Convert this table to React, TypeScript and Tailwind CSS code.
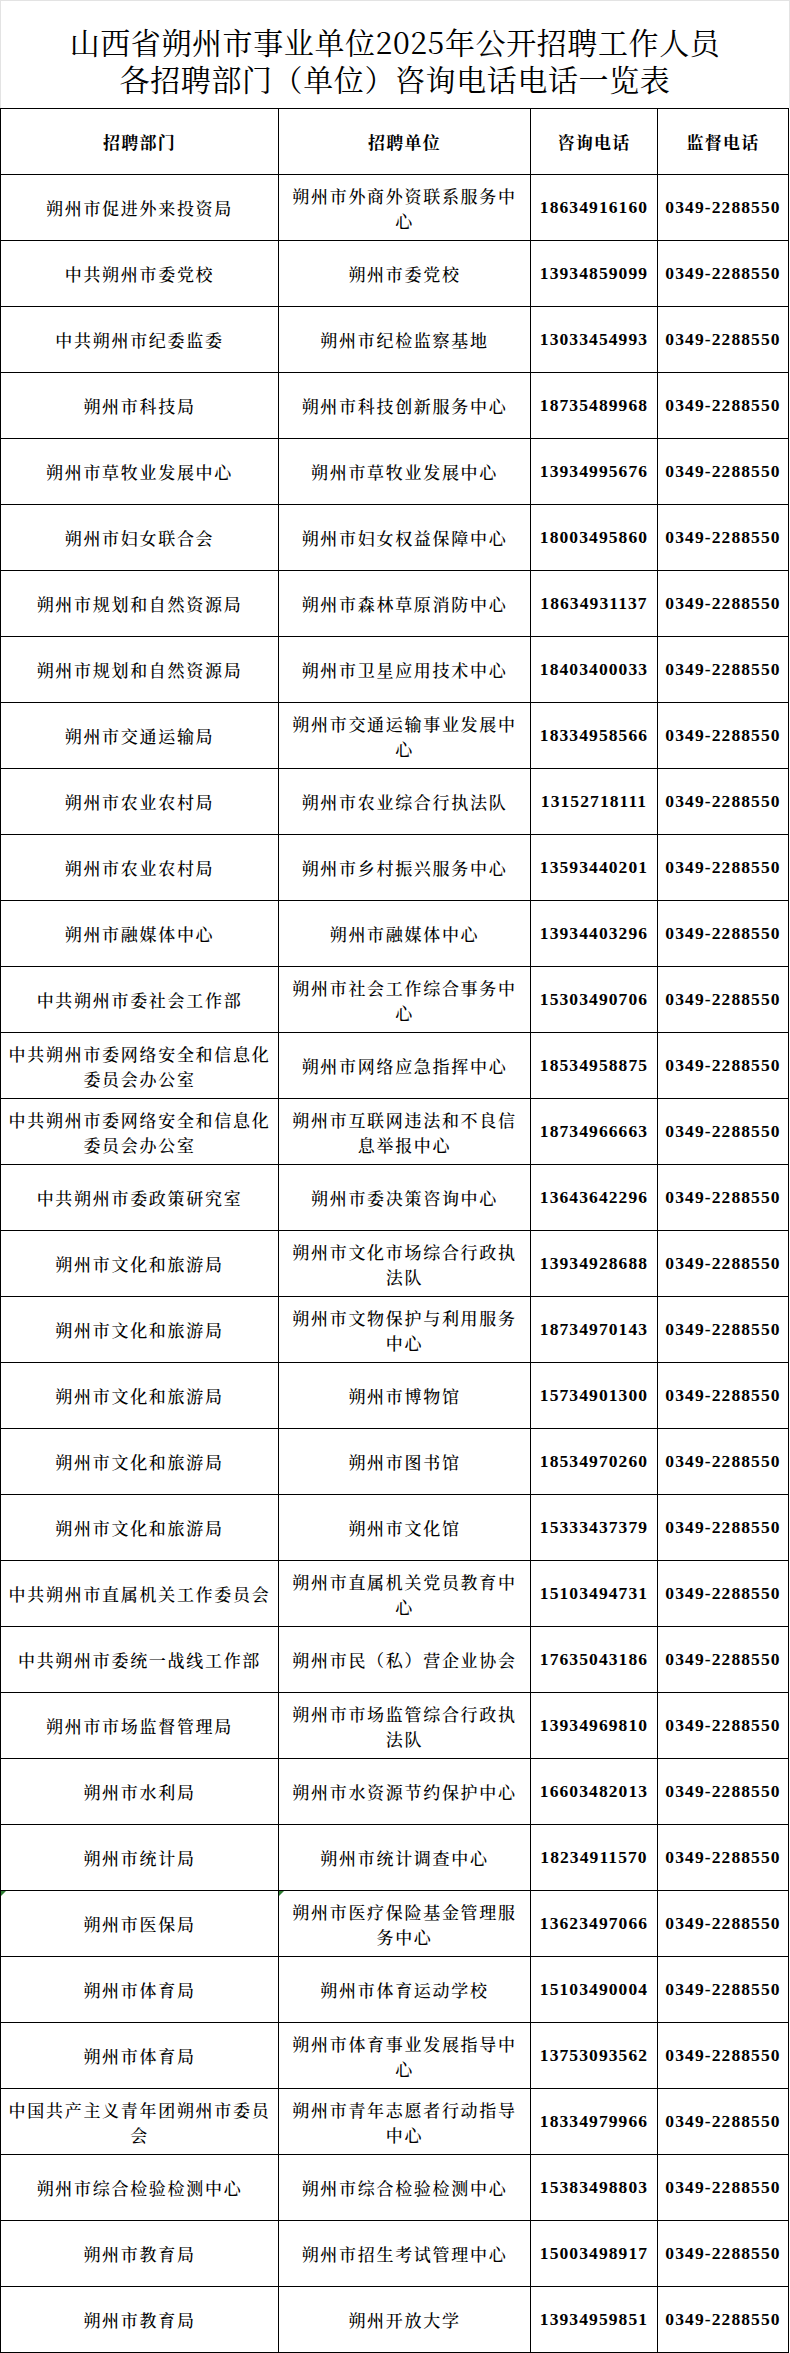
import React from "react";

type Row = { dept: string; unit: string; phone: string; mark?: boolean };

const rows: Row[] = [
  { dept: "朔州市促进外来投资局", unit: "朔州市外商外资联系服务中心", phone: "18634916160" },
  { dept: "中共朔州市委党校", unit: "朔州市委党校", phone: "13934859099" },
  { dept: "中共朔州市纪委监委", unit: "朔州市纪检监察基地", phone: "13033454993" },
  { dept: "朔州市科技局", unit: "朔州市科技创新服务中心", phone: "18735489968" },
  { dept: "朔州市草牧业发展中心", unit: "朔州市草牧业发展中心", phone: "13934995676" },
  { dept: "朔州市妇女联合会", unit: "朔州市妇女权益保障中心", phone: "18003495860" },
  { dept: "朔州市规划和自然资源局", unit: "朔州市森林草原消防中心", phone: "18634931137" },
  { dept: "朔州市规划和自然资源局", unit: "朔州市卫星应用技术中心", phone: "18403400033" },
  { dept: "朔州市交通运输局", unit: "朔州市交通运输事业发展中心", phone: "18334958566" },
  { dept: "朔州市农业农村局", unit: "朔州市农业综合行执法队", phone: "13152718111" },
  { dept: "朔州市农业农村局", unit: "朔州市乡村振兴服务中心", phone: "13593440201" },
  { dept: "朔州市融媒体中心", unit: "朔州市融媒体中心", phone: "13934403296" },
  { dept: "中共朔州市委社会工作部", unit: "朔州市社会工作综合事务中心", phone: "15303490706" },
  { dept: "中共朔州市委网络安全和信息化委员会办公室", unit: "朔州市网络应急指挥中心", phone: "18534958875" },
  { dept: "中共朔州市委网络安全和信息化委员会办公室", unit: "朔州市互联网违法和不良信息举报中心", phone: "18734966663" },
  { dept: "中共朔州市委政策研究室", unit: "朔州市委决策咨询中心", phone: "13643642296" },
  { dept: "朔州市文化和旅游局", unit: "朔州市文化市场综合行政执法队", phone: "13934928688" },
  { dept: "朔州市文化和旅游局", unit: "朔州市文物保护与利用服务中心", phone: "18734970143" },
  { dept: "朔州市文化和旅游局", unit: "朔州市博物馆", phone: "15734901300" },
  { dept: "朔州市文化和旅游局", unit: "朔州市图书馆", phone: "18534970260" },
  { dept: "朔州市文化和旅游局", unit: "朔州市文化馆", phone: "15333437379" },
  { dept: "中共朔州市直属机关工作委员会", unit: "朔州市直属机关党员教育中心", phone: "15103494731" },
  { dept: "中共朔州市委统一战线工作部", unit: "朔州市民（私）营企业协会", phone: "17635043186" },
  { dept: "朔州市市场监督管理局", unit: "朔州市市场监管综合行政执法队", phone: "13934969810" },
  { dept: "朔州市水利局", unit: "朔州市水资源节约保护中心", phone: "16603482013" },
  { dept: "朔州市统计局", unit: "朔州市统计调查中心", phone: "18234911570" },
  { dept: "朔州市医保局", unit: "朔州市医疗保险基金管理服务中心", phone: "13623497066", mark: true },
  { dept: "朔州市体育局", unit: "朔州市体育运动学校", phone: "15103490004" },
  { dept: "朔州市体育局", unit: "朔州市体育事业发展指导中心", phone: "13753093562" },
  { dept: "中国共产主义青年团朔州市委员会", unit: "朔州市青年志愿者行动指导中心", phone: "18334979966" },
  { dept: "朔州市综合检验检测中心", unit: "朔州市综合检验检测中心", phone: "15383498803" },
  { dept: "朔州市教育局", unit: "朔州市招生考试管理中心", phone: "15003498917" },
  { dept: "朔州市教育局", unit: "朔州开放大学", phone: "13934959851" },
];

const cjk = "font-['Noto_Serif_CJK_SC','Noto_Sans_CJK_SC',serif]";

function Mark() {
  return (
    <span className="absolute left-0 top-0 h-0 w-0 border-t-[5px] border-r-[5px] border-t-[#2e7d32] border-r-transparent" />
  );
}

function TextCell({ children, mark }: { children: React.ReactNode; mark?: boolean }) {
  return (
    <div
      className={`relative flex h-[66px] items-center justify-center border-r border-b border-black px-[5px] text-center text-[17px] leading-[25px] tracking-[1.7px] font-medium text-black ${cjk}`}
    >
      {mark && <Mark />}
      <span>{children}</span>
    </div>
  );
}

function NumCell({ children }: { children: React.ReactNode }) {
  return (
    <div className="flex h-[66px] items-center justify-center border-r border-b border-black text-[17.5px] font-bold tracking-[1.1px] text-black font-['Liberation_Serif',serif]">
      {children}
    </div>
  );
}

function HeadCell({ children }: { children: React.ReactNode }) {
  return (
    <div
      className={`flex h-[66px] items-center justify-center border-r border-b border-black text-[17px] font-bold tracking-[1.3px] text-black ${cjk}`}
    >
      {children}
    </div>
  );
}

export default function App() {
  return (
    <div className="w-[790px] bg-white">
      <div
        className={`flex h-[108px] flex-col items-center border-x border-t border-[#e3e3e3] pt-[22px] text-[30px] leading-[37px] tracking-[0.6px] text-black ${cjk}`}
      >
        <div>山西省朔州市事业单位2025年公开招聘工作人员</div>
        <div>各招聘部门（单位）咨询电话电话一览表</div>
      </div>
      <div className="grid w-[789px] grid-cols-[278px_252px_127px_131px] border-l border-t border-black">
        <HeadCell>招聘部门</HeadCell>
        <HeadCell>招聘单位</HeadCell>
        <HeadCell>咨询电话</HeadCell>
        <HeadCell>监督电话</HeadCell>
        {rows.map((r, i) => (
          <React.Fragment key={i}>
            <TextCell mark={r.mark}>{r.dept}</TextCell>
            <TextCell mark={r.mark}>{r.unit}</TextCell>
            <NumCell>{r.phone}</NumCell>
            <NumCell>0349-2288550</NumCell>
          </React.Fragment>
        ))}
      </div>
    </div>
  );
}
